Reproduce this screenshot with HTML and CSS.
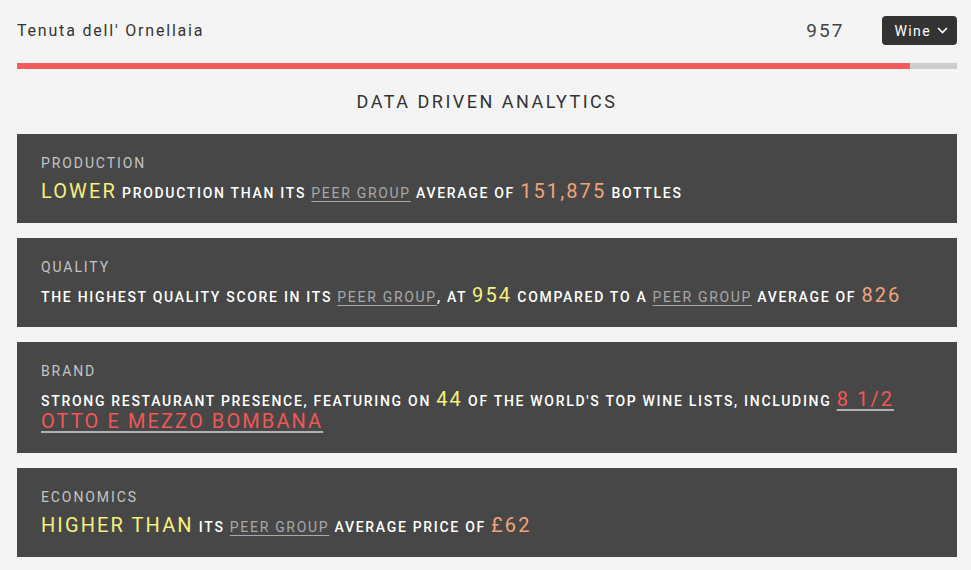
FILE: index.html
```html
<!DOCTYPE html>
<html>
<head>
<meta charset="utf-8">
<link rel="stylesheet" href="styles.css">
</head>
<body>
<div class="page">
  <header class="top">
    <div class="title">Tenuta dell' Ornellaia</div>
    <div class="top-right">
      <span class="score">957</span>
      <button class="select">Wine
        <svg width="11" height="7" viewBox="0 0 11 7"><path d="M1 1 L5.5 5.5 L10 1" fill="none" stroke="#fff" stroke-width="1.6"/></svg>
      </button>
    </div>
  </header>
  <div class="bar"><div class="bar-fill" style="width:95%"></div></div>
  <h1 class="heading">DATA DRIVEN ANALYTICS</h1>

  <section class="card">
    <div class="label">PRODUCTION</div>
    <p class="line"><span class="big yellow">LOWER</span> PRODUCTION THAN ITS <a class="peer">PEER GROUP</a> AVERAGE OF <span class="big orange">151,875</span> BOTTLES</p>
  </section>

  <section class="card">
    <div class="label">QUALITY</div>
    <p class="line">THE HIGHEST QUALITY SCORE IN ITS <a class="peer">PEER GROUP</a>, AT <span class="big yellow">954</span> COMPARED TO A <a class="peer">PEER GROUP</a> AVERAGE OF <span class="big orange">826</span></p>
  </section>

  <section class="card">
    <div class="label">BRAND</div>
    <p class="line">STRONG RESTAURANT PRESENCE, FEATURING ON <span class="big yellow">44</span> OF THE WORLD'S TOP WINE LISTS, INCLUDING <a class="big red">8 1/2 OTTO E MEZZO BOMBANA</a></p>
  </section>

  <section class="card">
    <div class="label">ECONOMICS</div>
    <p class="line"><span class="big yellow">HIGHER THAN</span> ITS <a class="peer">PEER GROUP</a> AVERAGE PRICE OF <span class="big orange">£62</span></p>
  </section>
</div>
</body>
</html>
```

FILE: styles.css
```css
* { box-sizing: border-box; }
html, body {
  margin: 0;
  padding: 0;
  background: #f4f4f4;
  font-family: Roboto, "Liberation Sans", sans-serif;
}
.page {
  padding: 0 14px 0 17px;
}
.top {
  display: flex;
  align-items: center;
  justify-content: space-between;
  padding-top: 16px;
}
.title {
  font-size: 16px;
  letter-spacing: 1.8px;
  color: #333;
}
.top-right {
  display: flex;
  align-items: center;
  gap: 38px;
}
.score {
  font-size: 19px;
  letter-spacing: 2px;
  color: #444;
}
.select {
  display: flex;
  align-items: center;
  gap: 6px;
  height: 29px;
  padding: 0 9px 0 12px;
  border: 0;
  border-radius: 4px;
  background: #333;
  color: #fff;
  font-family: Roboto, "Liberation Sans", sans-serif;
  font-size: 14px;
  font-weight: 400;
  letter-spacing: 1.4px;
}
.bar {
  margin-top: 18px;
  height: 6px;
  background: #cccccc;
}
.bar-fill {
  height: 100%;
  background: #f25c5c;
}
.heading {
  margin: 21px 0 20px;
  text-align: center;
  font-size: 18px;
  line-height: 24px;
  font-weight: 400;
  letter-spacing: 2.5px;
  color: #333;
}
.card {
  background: #474747;
  padding: 19px 24px 19px;
  margin-bottom: 15px;
}
.label {
  font-size: 14px;
  line-height: 20px;
  letter-spacing: 1.9px;
  color: #c4c4c4;
}
.line {
  margin: 9px 0 0;
  font-size: 14px;
  line-height: 22px;
  font-weight: 500;
  letter-spacing: 1.7px;
  color: #fff;
}
.big {
  font-size: 20px;
  font-weight: 400;
  letter-spacing: 2.1px;
  line-height: 16px;
}
.yellow { color: #f6f07c; }
.orange { color: #f2a37b; }
.red {
  color: #f25656;
  text-decoration: underline;
  text-decoration-color: #b0b0b0;
  text-decoration-thickness: 2px;
  text-underline-offset: 3px;
}
.peer {
  color: #a8a8a8;
  font-weight: 400;
  text-decoration: underline;
  text-decoration-thickness: 1px;
  text-underline-offset: 3px;
}
```
